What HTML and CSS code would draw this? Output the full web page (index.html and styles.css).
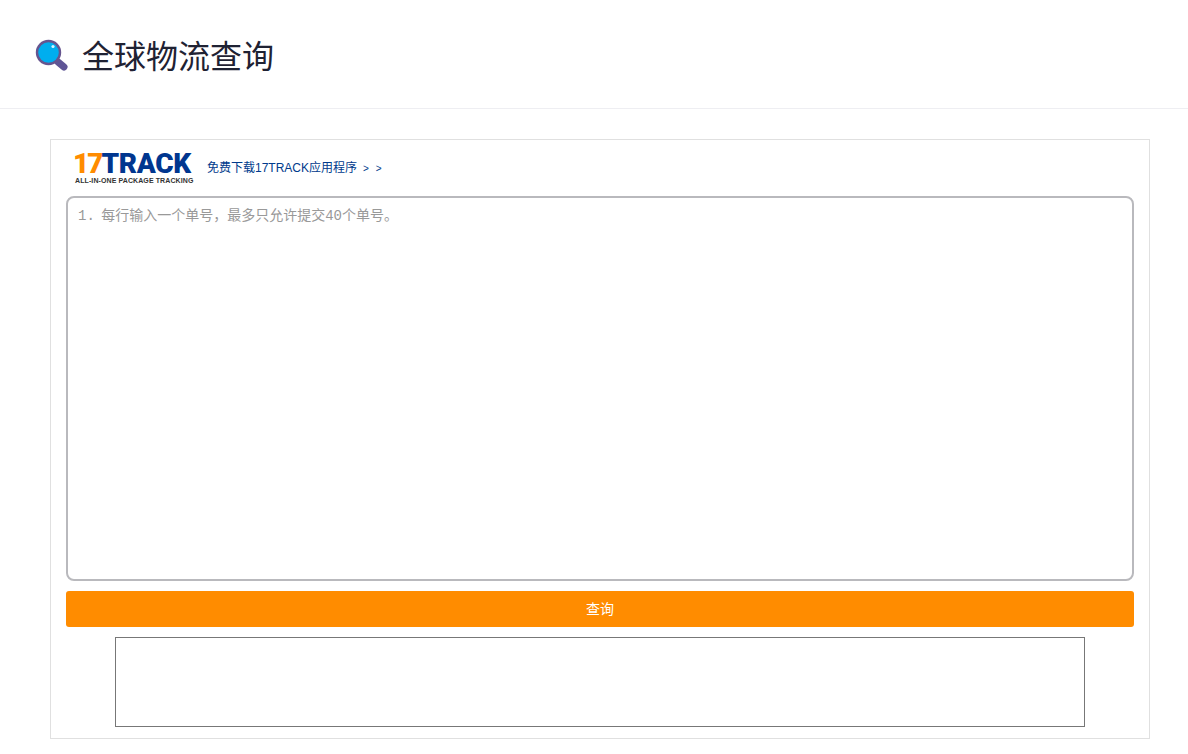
FILE: index.html
```html
<!DOCTYPE html>
<html>
<head>
    <meta charset="UTF-8">
    <title>全球物流查询</title>
    <link rel="stylesheet" href="styles.css">
</head>
<body>
    <div class="head">
        <svg class="head-icon" width="34" height="34" viewBox="0 0 34 34">
            <line x1="23" y1="23" x2="29" y2="28" stroke="#5f5596" stroke-width="7" stroke-linecap="round"/>
            <circle cx="13.5" cy="13.5" r="11.5" fill="#00aeef" stroke="#66558f" stroke-width="2.4"/>
            <circle cx="18" cy="7.5" r="1.6" fill="#d8f3ff"/>
        </svg>
        <h1 class="head-title">全球物流查询</h1>
    </div>
    <div class="panel">
        <div class="brand">
            <div class="logo">
                <div class="logo-name"><span class="logo-num">17</span><span class="logo-word">TRACK</span></div>
                <div class="logo-sub">ALL-IN-ONE PACKAGE TRACKING</div>
            </div>
            <a class="app-link" href="#">免费下载17TRACK应用程序<span class="app-arrow">&gt; &gt;</span></a>
        </div>
        <textarea class="numbers" placeholder="1. 每行输入一个单号，最多只允许提交40个单号。"></textarea>
        <button class="track-btn">查询</button>
        <div class="ad-box"></div>
    </div>
</body>
</html>
```

FILE: styles.css
```css
body {
    margin: 0;
    background: #fff;
    font-family: "Liberation Sans", "Noto Sans CJK SC", sans-serif;
}
.head {
    height: 108px;
    border-bottom: 1px solid #eeeef2;
    display: flex;
    align-items: center;
    padding-left: 35px;
}
.head-icon {
    margin-right: 13px;
    margin-top: 4px;
}
.head-title {
    margin: 6px 0 0;
    font-size: 32px;
    font-weight: normal;
    color: #1f2233;
    line-height: 40px;
}
.panel {
    margin: 30px 38px 0 50px;
    border: 1px solid #e0e0e0;
    height: 598px;
    padding: 0 15px;
}
.brand {
    height: 56px;
    display: flex;
    align-items: flex-start;
}
.logo {
    width: 134px;
    margin-left: 7px;
    padding-top: 11px;
}
.logo-name {
    font-family: Roboto, "Liberation Sans", sans-serif;
    font-weight: 900;
    font-size: 28px;
    line-height: 25px;
    height: 25px;
    white-space: nowrap;
}
.logo-num {
    color: #ff8c00;
    letter-spacing: -2px;
}
.logo-word {
    color: #00368f;
    letter-spacing: -0.3px;
}
.logo-sub {
    font-size: 7px;
    font-weight: bold;
    line-height: 10px;
    margin-left: 2px;
    letter-spacing: 0.1px;
    color: #333;
    white-space: nowrap;
}
.app-link {
    margin-top: 21px;
    font-size: 12px;
    line-height: 15px;
    color: #003a8c;
    text-decoration: none;
}
.app-arrow {
    margin-left: 6px;
    font-size: 10px;
    word-spacing: 4px;
}
.numbers {
    display: block;
    width: 100%;
    height: 385px;
    box-sizing: border-box;
    border: 2px solid #b9b9bd;
    border-radius: 8px;
    padding: 9px 10px;
    margin: 0;
    font-family: "Liberation Mono", "Noto Sans CJK SC", monospace;
    font-size: 14px;
    line-height: 18px;
    word-spacing: -2px;
    resize: none;
    outline: none;
}
.numbers::placeholder {
    color: #999;
    opacity: 1;
}
.track-btn {
    display: block;
    width: 100%;
    height: 36px;
    margin-top: 10px;
    padding: 0 0 2px;
    border: 0;
    border-radius: 3px;
    background: #ff8c00;
    color: #fff;
    font-family: "Liberation Sans", "Noto Sans CJK SC", sans-serif;
    font-size: 14px;
}
.ad-box {
    width: 968px;
    height: 88px;
    margin: 10px auto 0;
    border: 1px solid #777;
}
```
